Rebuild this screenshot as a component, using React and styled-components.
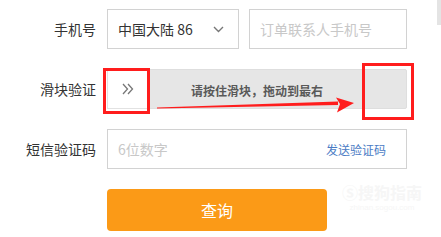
import React from "react";
import styled, { createGlobalStyle } from "styled-components";

const Global = createGlobalStyle`
  html, body { margin: 0; padding: 0; background: #fff; }
  body { font-family: "Microsoft YaHei", "Noto Sans CJK SC", "Noto Sans", sans-serif; }
  * { box-sizing: border-box; }
`;

const Page = styled.div`
  position: relative;
  width: 441px;
  height: 237px;
  overflow: hidden;
  background: #fff;
`;

const Form = styled.div`
  display: grid;
  grid-template-columns: 96px 300px;
  column-gap: 11px;
  row-gap: 20px;
  padding-top: 9px;
`;

const Label = styled.div`
  justify-self: end;
  align-self: center;
  font-size: 14px;
  color: #333;
  line-height: 20px;
  white-space: nowrap;
`;

const Row = styled.div`
  display: flex;
  gap: 10px;
  height: 40px;
`;

const Box = styled.div`
  display: flex;
  align-items: center;
  justify-content: space-between;
  height: 40px;
  width: ${(p) => p.$w || "100%"};
  border: 1px solid #d2d2d2;
  background: #fff;
  padding: 0 ${(p) => p.$pr || 10}px 0 10px;
  font-size: 14px;
  color: ${(p) => (p.$placeholder ? "#c8c8c8" : "#333")};
  white-space: nowrap;
`;

const Link = styled.span`
  font-size: 12px;
  color: #4a7bc4;
`;

const Slider = styled.div`
  position: relative;
  display: flex;
  align-items: center;
  justify-content: center;
  height: 40px;
  background: #e6e6e6;
  border: 1px solid #dedede;
  border-radius: 2px;
`;

const Handle = styled.div`
  position: absolute;
  left: -1px;
  top: -1px;
  width: 41px;
  height: 40px;
  background: #fff;
  border: 1px solid #e2e2e2;
  display: flex;
  align-items: center;
  justify-content: center;
`;

const SliderText = styled.span`
  font-size: 12px;
  font-weight: bold;
  color: #595959;
  margin-top: 2px;
`;

const Button = styled.button`
  grid-column: 2;
  width: 220px;
  height: 42px;
  border: none;
  border-radius: 4px;
  background: #fb9a17;
  color: #fff;
  font-family: inherit;
  font-size: 16px;
  padding: 0;
`;

const Mark = styled.div`
  position: absolute;
  left: ${(p) => p.$x}px;
  top: ${(p) => p.$y}px;
  width: ${(p) => p.$w}px;
  height: ${(p) => p.$h}px;
  border: 3px solid #ff1d1d;
`;

const Overlay = styled.svg`
  position: absolute;
  left: 0;
  top: 0;
  pointer-events: none;
`;

const Scroll = styled.div`
  position: absolute;
  right: 0;
  top: 0;
  width: 4px;
  height: 25px;
  background: #e4e4e4;
`;

const Watermark = styled.div`
  position: absolute;
  left: 342px;
  top: 184px;
  color: #f6f6f6;
  display: flex;
  flex-direction: column;
  align-items: center;
  line-height: 1;
`;

const WmTitle = styled.span`
  font-size: 16px;
  font-weight: bold;
`;

const WmSub = styled.span`
  font-size: 8px;
  margin-top: 4px;
  font-family: "Liberation Sans", sans-serif;
`;

export default function App() {
  return (
    <Page>
      <Global />
      <Form>
        <Label>手机号</Label>
        <Row>
          <Box $w="132px" $pr={14}>
            <span>中国大陆 86</span>
            <svg width="11" height="7" viewBox="0 0 11 7">
              <polyline points="1,1 5.5,5.5 10,1" fill="none" stroke="#777" strokeWidth="1.4" />
            </svg>
          </Box>
          <Box $w="158px" $placeholder>订单联系人手机号</Box>
        </Row>

        <Label>滑块验证</Label>
        <Slider>
          <Handle>
            <svg width="12" height="12" viewBox="0 0 12 12">
              <polyline points="1,1 5.5,6 1,11" fill="none" stroke="#777" strokeWidth="1.3" />
              <polyline points="6,1 10.5,6 6,11" fill="none" stroke="#777" strokeWidth="1.3" />
            </svg>
          </Handle>
          <SliderText>请按住滑块，拖动到最右</SliderText>
        </Slider>

        <Label>短信验证码</Label>
        <Box $placeholder $pr={20}>
          <span>6位数字</span>
          <Link>发送验证码</Link>
        </Box>

        <Button>查询</Button>
      </Form>

      <Mark $x={103} $y={68} $w={47} $h={46} />
      <Mark $x={362} $y={63} $w={52} $h={57} />
      <Overlay width="441" height="237" viewBox="0 0 441 237">
        <polygon points="157,107.5 338,101.5 338,105 157,108.5" fill="#ff1d1d" />
        <polygon points="336,97.5 354,103 337,112.5 340,104" fill="#ff1d1d" />
      </Overlay>
      <Watermark>
        <WmTitle>Ⓢ搜狗指南</WmTitle>
        <WmSub>zhinan.sogou.com</WmSub>
      </Watermark>
      <Scroll />
    </Page>
  );
}
